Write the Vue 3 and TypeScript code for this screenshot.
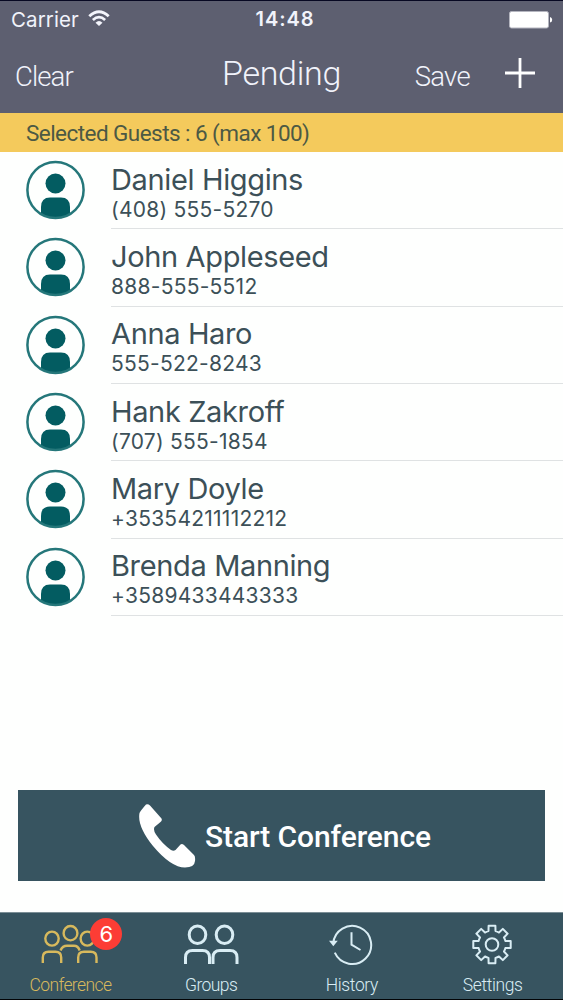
<script setup lang="ts">
interface Guest {
  name: string
  phone: string
}

const guests: Guest[] = [
  { name: 'Daniel Higgins', phone: '(408) 555-5270' },
  { name: 'John Appleseed', phone: '888-555-5512' },
  { name: 'Anna Haro', phone: '555-522-8243' },
  { name: 'Hank Zakroff', phone: '(707) 555-1854' },
  { name: 'Mary Doyle', phone: '+35354211112212' },
  { name: 'Brenda Manning', phone: '+3589433443333' },
]

// Eight-toothed gear outline centred on (22, 22)
function gearPath(): string {
  const parts: string[] = []
  const point = (x: number, y: number, a: number) =>
    `${(22 + x * Math.cos(a) - y * Math.sin(a)).toFixed(2)} ${(22 + x * Math.sin(a) + y * Math.cos(a)).toFixed(2)}`
  for (let i = 0; i < 8; i++) {
    const a = (i * Math.PI) / 4
    const root = point(13.4, -3.5, a)
    parts.push(`${i === 0 ? 'M' : 'A14 14 0 0 1 '}${root}`)
    parts.push(`L${point(18.7, -3.4, a)}`, `L${point(18.7, 3.4, a)}`, `L${point(13.4, 3.5, a)}`)
  }
  parts.push(`A14 14 0 0 1 ${point(13.4, -3.5, 0)}Z`)
  return parts.join('')
}

const gear = gearPath()
</script>

<template>
  <div class="phone">
    <header class="top">
      <div class="status">
        <div class="carrier">
          <span class="carrier-name">Carrier</span>
          <svg class="wifi" width="22" height="17" viewBox="0 0 22 17">
            <path d="M1.3 6.2Q11-2.8 20.7 6.2" fill="none" stroke="#f4f5fc" stroke-width="2.9" />
            <path d="M4.9 10Q11 4.4 17.1 10" fill="none" stroke="#f4f5fc" stroke-width="2.7" />
            <path d="M7.5 12.7Q11 9.5 14.5 12.7L11 16Z" fill="#f4f5fc" />
          </svg>
        </div>
        <span class="time">14:48</span>
        <svg class="battery" width="44" height="18" viewBox="0 0 44 18">
          <rect x=".5" y=".5" width="39" height="16.5" rx="2" fill="#fff" stroke="#b4b5bf" />
          <path d="M41 6Q43.2 6.4 43.2 8.8T41 11.6Z" fill="#fff" />
        </svg>
      </div>
      <nav class="nav">
        <span class="clear">Clear</span>
        <h1 class="title">Pending</h1>
        <div class="actions">
          <span class="save">Save</span>
          <svg class="plus" width="32" height="32" viewBox="0 0 32 32">
            <path d="M1 16H31M16 1V31" stroke="#fff" stroke-width="2.8" />
          </svg>
        </div>
      </nav>
    </header>

    <div class="banner"><span class="banner-text">Selected Guests : 6 (max 100)</span></div>

    <ul class="guests">
      <li v-for="guest in guests" :key="guest.phone" class="guest">
        <svg class="avatar" width="60" height="60" viewBox="0 0 60 60">
          <path d="M16 54V47Q16 37.5 25 37.5H36Q45 37.5 45 47V54Q30.500 62 16 54Z" fill="#035c61" />
          <circle cx="30.5" cy="23.5" r="10" fill="#035c61" />
          <circle cx="30.5" cy="30" r="28.1" fill="none" stroke="#25777a" stroke-width="2.5" />
        </svg>
        <div class="details">
          <span class="name">{{ guest.name }}</span>
          <span class="phone-number">{{ guest.phone }}</span>
        </div>
      </li>
    </ul>

    <main class="action-area">
      <div class="start">
        <svg class="handset" width="58" height="66" viewBox="0 0 58 66">
          <path
            d="M8 1.5Q10 .5 12 2.5L23.5 15.5Q24.5 17.5 22.5 19L16.5 24Q15 27 18 31.5Q24 40.5 33 47Q35.5 48.5 37.5 47L42.5 41.5Q44 40.5 46 42L56 52Q57.5 53.5 57 58Q56.5 64.5 47 64.5Q33 64.5 15 43Q-1 23 1.5 10Q2.3 8 8 1.5Z"
            fill="#fff"
          />
        </svg>
        <span class="start-label">Start Conference</span>
      </div>
    </main>

    <footer class="tabs">
      <div class="tab active">
        <div class="icon-wrap">
          <svg class="tab-icon" width="60" height="44" viewBox="0 0 60 44" fill="none" stroke="currentColor" stroke-width="2.4">
            <ellipse cx="12" cy="15.6" rx="6.7" ry="7" />
            <ellipse cx="30.5" cy="10.2" rx="6.9" ry="7.2" />
            <ellipse cx="47.3" cy="15.6" rx="6.7" ry="7" />
            <path d="M2.800 40V34.500Q2.800 28.800 8.500 28.800H15.500Q21.200 28.800 21.200 34.500V40M38.200 40V34.500Q38.200 28.800 43.900 28.800H50.800Q56.500 28.800 56.500 34.500V40M20.500 27.500Q22.500 22.800 27 22.800H34Q38 22.800 39.700 27.500" />
          </svg>
          <span class="badge">6</span>
        </div>
        <span class="tab-label l-conference">Conference</span>
      </div>
      <div class="tab">
        <svg class="tab-icon" width="60" height="44" viewBox="0 0 60 44" fill="none" stroke="currentColor" stroke-width="3">
          <ellipse cx="16.5" cy="11.7" rx="8.3" ry="8.8" />
          <ellipse cx="43.5" cy="11.7" rx="8.3" ry="8.8" />
          <path d="M4.500 41V34.500Q4.500 27.500 11.500 27.500H21.500Q28.500 27.500 28.500 34.500V41M32 41V34.500Q32 27.500 39 27.500H49Q56 27.500 56 34.500V41" />
        </svg>
        <span class="tab-label l-groups">Groups</span>
      </div>
      <div class="tab">
        <svg class="tab-icon" width="46" height="44" viewBox="0 0.8 46 44" fill="none" stroke="currentColor" stroke-width="2">
          <path d="M4.200 21.500A19 19 0 1 1 5.800 30.500M22.500 10V22.500L31.500 27.800" />
          <path d="M0 18.500H8.800L4.300 24Z" fill="currentColor" stroke="none" />
        </svg>
        <span class="tab-label l-history">History</span>
      </div>
      <div class="tab">
        <svg class="tab-icon" width="46" height="44" viewBox="0 0.5 46 44" fill="none" stroke="currentColor" stroke-width="2" stroke-linejoin="round">
          <path :d="gear" />
          <circle cx="22" cy="22" r="6.3" />
        </svg>
        <span class="tab-label l-settings">Settings</span>
      </div>
    </footer>
  </div>
</template>

<style>
body {
  margin: 0;
  background: #fefffe;
}
</style>

<style scoped>
.phone {
  width: 563px;
  height: 1000px;
  display: flex;
  flex-direction: column;
  overflow: hidden;
  box-sizing: border-box;
  border-bottom: 1px solid #020406;
  background: #fefffe;
  font-family: Roboto, "Liberation Sans", sans-serif;
  white-space: nowrap;
}
.top {
  height: 113px;
  flex: none;
  box-sizing: border-box;
  border-top: 1px solid #070822;
  background: #5d5f70;
  color: #f1f3fb;
}
.status {
  height: 37px;
  display: grid;
  grid-template-columns: 1fr auto 1fr;
  align-items: center;
  padding: 0 10px 0 11px;
  font-family: Inter, sans-serif;
  line-height: 37px;
}
.carrier {
  display: flex;
  align-items: center;
  gap: 9px;
}
.carrier-name { font-size: 20.5px; letter-spacing: 0.1px; }
.wifi { margin-bottom: 2px; }
.time { font-size: 20px; font-weight: 600; letter-spacing: 0.9px; padding-left: 6px; line-height: 37px; }
.battery { justify-self: end; }
.nav {
  height: 75px;
  display: grid;
  grid-template-columns: 1fr auto 1fr;
  padding: 0 27px 0 15px;
  font-weight: 300;
}
.clear { font-size: 27.5px; line-height: 77px; letter-spacing: -0.9px; }
.title { margin: 0; padding-left: 12px; font-size: 34px; line-height: 71px; font-weight: 300; letter-spacing: -0.3px; }
.actions { display: flex; justify-content: flex-end; align-items: center; gap: 34px; }
.save { font-size: 27.5px; line-height: 77px; letter-spacing: -0.7px; }
.plus { margin-bottom: 7px; }
.banner {
  height: 39px;
  flex: none;
  background: #f4ca5c;
  color: #4c5944;
  padding-left: 26px;
  font-size: 22.5px;
  line-height: 41px;
  letter-spacing: -0.55px;
}
.guests {
  list-style: none;
  margin: 0;
  padding: 0;
  height: 464px;
  display: grid;
  grid-template-rows: repeat(6, 1fr);
  flex: none;
}
.guest { display: flex; gap: 26px; padding-left: 25px; min-height: 0; }
.avatar { margin-top: 8px; flex: none; }
.details {
  flex: 1;
  display: flex;
  flex-direction: column;
  border-bottom: 1px solid #dfe2e3;
  box-sizing: border-box;
  padding-top: 9.6px;
  font-family: Inter, sans-serif;
  color: #3c5058;
}
.name { font-size: 29px; line-height: 36px; letter-spacing: -0.36px; }
.phone-number { font-size: 21px; line-height: 24px; letter-spacing: 0.25px; }
.action-area { flex: 1; display: flex; align-items: flex-end; padding: 0 18px 31px; }
.start {
  width: 100%;
  height: 91px;
  display: flex;
  align-items: center;
  justify-content: center;
  gap: 9px;
  background: #375460;
  color: #fff;
  padding-left: 6px;
  box-sizing: border-box;
}
.start-label { font-size: 30px; font-weight: 500; line-height: 91px; letter-spacing: -0.1px; padding-top: 2px; }
.tabs {
  height: 87px;
  flex: none;
  display: grid;
  grid-template-columns: repeat(4, 1fr);
  box-sizing: border-box;
  border-top: 1px solid #7b8e96;
  background: #375460;
}
.tab {
  display: flex;
  flex-direction: column;
  align-items: center;
  padding-top: 10px;
  color: #d9edf4;
}
.active { color: #d7b95d; }
.icon-wrap { position: relative; }
.tab-icon { display: block; }
.badge {
  position: absolute;
  left: 50px;
  top: -5px;
  width: 32px;
  height: 32px;
  border-radius: 50%;
  background: #fc3d35;
  color: #fff;
  font: 22px/32px Inter, sans-serif;
  text-align: center;
}
.tab-label { font-size: 17.5px; font-weight: 300; line-height: 25px; margin-top: 6px; }
.l-conference, .l-groups { letter-spacing: -0.6px; }
.l-history, .l-settings { letter-spacing: -0.38px; }
</style>
